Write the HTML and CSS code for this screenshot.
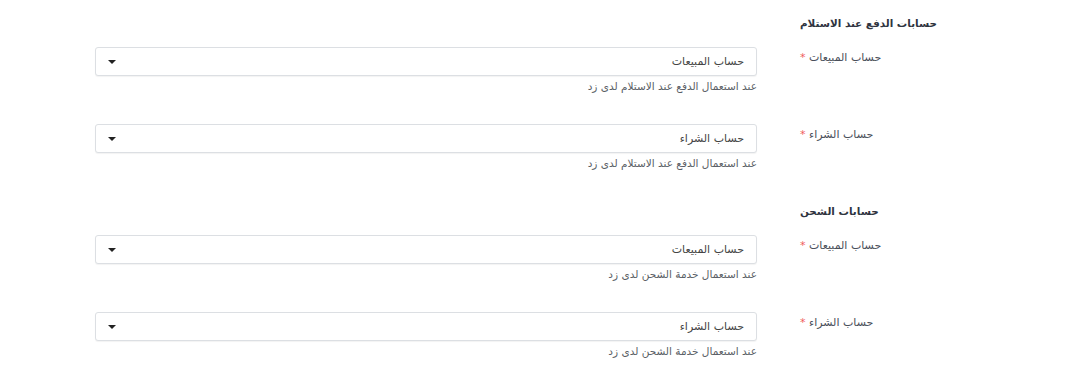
FILE: index.html
```html
<!DOCTYPE html>
<html lang="ar" dir="rtl">
<head>
<meta charset="utf-8">
<link rel="stylesheet" href="styles.css">
</head>
<body>
<div class="page">
  <section class="group">
    <h3 class="group-title">حسابات الدفع عند الاستلام</h3>
    <div class="row">
      <label class="label">حساب المبيعات <span class="req">*</span></label>
      <div class="field">
        <div class="select"><span class="value">حساب المبيعات</span><span class="caret"></span></div>
        <div class="help">عند استعمال الدفع عند الاستلام لدى زد</div>
      </div>
    </div>
    <div class="row">
      <label class="label">حساب الشراء <span class="req">*</span></label>
      <div class="field">
        <div class="select"><span class="value">حساب الشراء</span><span class="caret"></span></div>
        <div class="help">عند استعمال الدفع عند الاستلام لدى زد</div>
      </div>
    </div>
  </section>
  <section class="group">
    <h3 class="group-title">حسابات الشحن</h3>
    <div class="row">
      <label class="label">حساب المبيعات <span class="req">*</span></label>
      <div class="field">
        <div class="select"><span class="value">حساب المبيعات</span><span class="caret"></span></div>
        <div class="help">عند استعمال خدمة الشحن لدى زد</div>
      </div>
    </div>
    <div class="row">
      <label class="label">حساب الشراء <span class="req">*</span></label>
      <div class="field">
        <div class="select"><span class="value">حساب الشراء</span><span class="caret"></span></div>
        <div class="help">عند استعمال خدمة الشحن لدى زد</div>
      </div>
    </div>
  </section>
</div>
</body>
</html>
```
FILE: styles.css
```css
html, body {
  margin: 0;
  padding: 0;
  background: #ffffff;
}
body {
  font-family: "DejaVu Sans", "Noto Sans", sans-serif;
  color: #3a3f4a;
}
.page {
  padding: 15px 0 0 95px;
}
.group + .group {
  padding-top: 2px;
}
.group-title {
  margin: 0 0 16px 705px;
  font-size: 10.4px;
  line-height: 16px;
  font-weight: bold;
  color: #2f3440;
  text-align: left;
}
.row {
  display: flex;
  flex-direction: row;
  margin-bottom: 31px;
}
.label {
  flex: 1;
  margin-left: 43px;
  padding-top: 3px;
  font-size: 11px;
  line-height: 16px;
  color: #4a4f5a;
  text-align: left;
}
.req {
  color: #ef5b5b;
}
.field {
  width: 662px;
  flex: none;
  display: flex;
  flex-direction: column;
}
.select {
  height: 27px;
  border: 1px solid #dcdfe3;
  border-radius: 3px;
  box-shadow: 0 1px 1px rgba(0,0,0,0.05);
  display: flex;
  align-items: center;
  justify-content: space-between;
  padding: 0 12px 0 12px;
  background: #fff;
}
.value {
  font-size: 11px;
  color: #444;
}
.caret {
  width: 0;
  height: 0;
  border-left: 4px solid transparent;
  border-right: 4px solid transparent;
  border-top: 4px solid #222;
}
.help {
  margin-top: 3px;
  font-size: 10.5px;
  line-height: 14px;
  color: #5b5f66;
}
```
